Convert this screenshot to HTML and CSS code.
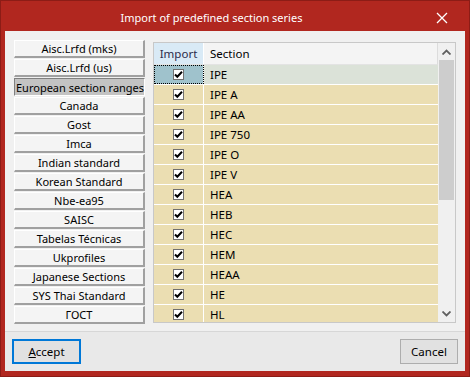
FILE: index.html
```html
<!DOCTYPE html>
<html lang="en">
<head>
    <meta charset="UTF-8">
    <title>Import of predefined section series</title>
    <link rel="stylesheet" href="styles.css">
</head>
<body>

    <div class="window">
        <!-- Title bar -->
        <div class="title-bar">
            <span class="title">Import of predefined section series</span>
            <span class="close-btn">
                <svg width="12" height="12" viewBox="0 0 12 12">
                    <path d="M1 1 L11 11 M11 1 L1 11" stroke="#fff" stroke-width="1.3" fill="none"/>
                </svg>
            </span>
        </div>

        <div class="client">
            <div class="main">
                <!-- Series list -->
                <div class="series-list">
                    <div class="series-btn">Aisc.Lrfd (mks)</div>
                    <div class="series-btn">Aisc.Lrfd (us)</div>
                    <div class="series-btn active">European section ranges</div>
                    <div class="series-btn">Canada</div>
                    <div class="series-btn">Gost</div>
                    <div class="series-btn">Imca</div>
                    <div class="series-btn">Indian standard</div>
                    <div class="series-btn">Korean Standard</div>
                    <div class="series-btn">Nbe-ea95</div>
                    <div class="series-btn">SAISC</div>
                    <div class="series-btn">Tabelas Técnicas</div>
                    <div class="series-btn">Ukprofiles</div>
                    <div class="series-btn">Japanese Sections</div>
                    <div class="series-btn">SYS Thai Standard</div>
                    <div class="series-btn">ГОСТ</div>
                </div>

                <!-- Section grid -->
                <div class="grid">
                    <div class="grid-body">
                        <div class="grid-head">
                            <div class="col-import hot">Import</div>
                            <div class="col-section">Section</div>
                        </div>
                        <div class="grid-rows" id="rows"></div>
                    </div>
                    <div class="vscroll">
                        <div class="arrow">
                            <svg width="9" height="6" viewBox="0 0 9 6"><path d="M0.5 5.5 L4.5 1.5 L8.5 5.5" stroke="#606060" stroke-width="1.8" fill="none"/></svg>
                        </div>
                        <div class="thumb"></div>
                        <div class="track"></div>
                        <div class="arrow">
                            <svg width="9" height="6" viewBox="0 0 9 6"><path d="M0.5 0.5 L4.5 4.5 L8.5 0.5" stroke="#606060" stroke-width="1.8" fill="none"/></svg>
                        </div>
                    </div>
                </div>
            </div>

            <!-- Buttons -->
            <div class="footer">
                <button class="dlg-btn default"><u>A</u>ccept</button>
                <button class="dlg-btn">Cancel</button>
            </div>
        </div>
    </div>

    <script>
        // Sections of the selected series
        var sections = ["IPE", "IPE A", "IPE AA", "IPE 750", "IPE O", "IPE V", "HEA", "HEB", "HEC", "HEM", "HEAA", "HE", "HL"];

        var check = '<span class="check"><svg width="9" height="9" viewBox="0 0 9 9"><path d="M1 4.5 L3.3 6.8 L8 1.8" stroke="#000" stroke-width="2" fill="none"/></svg></span>';

        var html = "";
        sections.forEach(function (name, i) {
            html += '<div class="grid-row' + (i === 0 ? ' selected' : '') + '">' +
                '<div class="col-import">' + check + '</div>' +
                '<div class="col-section">' + name + '</div></div>';
        });
        document.getElementById("rows").innerHTML = html;
    </script>

</body>
</html>
```

FILE: styles.css
```css
body {
    margin: 0;
    padding: 0;
    font-family: 'Noto Sans', sans-serif;
    font-size: 11px;
    color: #000;
    overflow: hidden;
}

.window {
    width: 470px;
    height: 377px;
    box-sizing: border-box;
    background: #b1271f;
    border: 1px solid #8c1c16;
    padding: 0 4px 5px 4px;
    display: flex;
    flex-direction: column;
}

.title-bar {
    height: 30px;
    display: flex;
    align-items: center;
    justify-content: center;
    position: relative;
    color: #fff;
}

.title {
    font-size: 11px;
    margin-left: -47px;
    margin-top: 2px;
}

.close-btn {
    position: absolute;
    right: 17px;
    top: 11px;
    line-height: 0;
}

.client {
    flex: 1;
    background: #f0f0f0;
    display: flex;
    flex-direction: column;
}

.main {
    flex: 1;
    display: flex;
    gap: 8px;
    padding: 9px 8px 0 9px;
    border-bottom: 1px solid #d7d7d7;
}

/* Left list of series */
.series-list {
    width: 131px;
    display: flex;
    flex-direction: column;
    gap: 1px;
}

.series-btn {
    height: 18px;
    line-height: 16px;
    box-sizing: border-box;
    background: #f4f4f4;
    border-top: 1px solid #fff;
    border-left: 1px solid #fff;
    border-right: 2px solid #a0a0a0;
    border-bottom: 2px solid #a0a0a0;
    text-align: center;
    white-space: nowrap;
    overflow: hidden;
}

.series-btn.active {
    background: #c3c3c3;
    border-top-color: #808080;
    border-left-color: #808080;
    border-right: 1px solid #fff;
    border-bottom: 1px solid #fff;
    line-height: 17px;
    text-align: left;
    padding-left: 1px;
}

/* Grid */
.grid {
    width: 303px;
    height: 281px;
    margin-top: 2px;
    box-sizing: border-box;
    border: 1px solid #c8c8c8;
    background: #f0f0f0;
    display: flex;
}

.grid-body {
    flex: 1;
    overflow: hidden;
}

.grid-head {
    display: flex;
    height: 22px;
    line-height: 22px;
    background: #f4f4f4;
    border-right: 1px solid #dcdcdc;
    border-bottom: 1px solid #e3e3e3;
    box-sizing: border-box;
    font-size: 11.5px;
}

.grid-head .col-import {
    color: #2b2b4b;
    text-align: center;
}

.grid-head .hot {
    background: #d9eaf6;
}

.col-import {
    width: 49px;
    flex-shrink: 0;
    border-right: 1px solid #fff;
    display: flex;
    align-items: center;
    justify-content: center;
}

.col-section {
    flex: 1;
    padding-left: 6px;
}

.grid-row {
    display: flex;
    height: 20px;
    line-height: 19px;
    box-sizing: border-box;
    border-bottom: 1px solid #fff;
    background: #ebdeb2;
    font-size: 11.5px;
}

.grid-row.selected .col-import {
    background: #9fc2cc;
    outline: 1px dotted #000;
    outline-offset: -1px;
}

.grid-row.selected .col-section {
    background: #dbe2d8;
}

.check {
    width: 11px;
    height: 11px;
    box-sizing: border-box;
    border: 1px solid #707070;
    background: #fff;
    display: flex;
    align-items: center;
    justify-content: center;
}

/* Vertical scrollbar */
.vscroll {
    width: 17px;
    display: flex;
    flex-direction: column;
    background: #f0f0f0;
}

.arrow {
    height: 17px;
    display: flex;
    align-items: center;
    justify-content: center;
}

.thumb {
    height: 140px;
    margin: 0 1px;
    background: #cdcdcd;
}

.track {
    flex: 1;
}

/* Footer buttons */
.footer {
    height: 39px;
    background: #e9e9e9;
    display: flex;
    justify-content: space-between;
    align-items: center;
    padding: 0 7px 0 7px;
}

.dlg-btn {
    height: 25px;
    font-family: 'Noto Sans', sans-serif;
    font-size: 11.5px;
    background: #e1e1e1;
    border: 1px solid #adadad;
    padding: 0;
    width: 58px;
    color: #000;
}

.dlg-btn.default {
    width: 69px;
    border: 2px solid #0078d7;
}
```
